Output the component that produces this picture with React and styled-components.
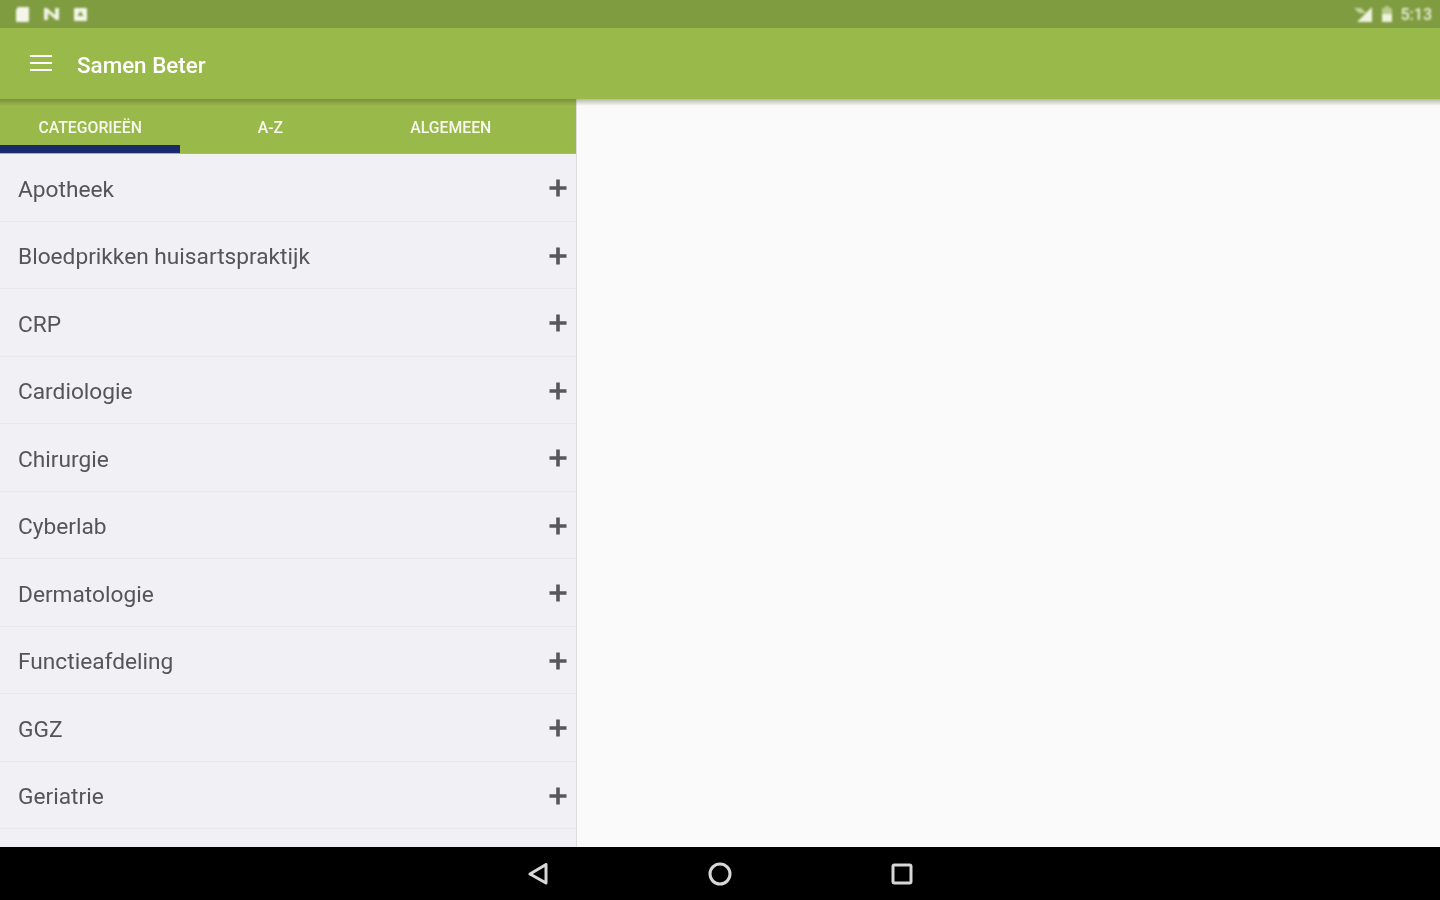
import React from "react";
import styled, { createGlobalStyle } from "styled-components";

const Global = createGlobalStyle`
  html, body { margin: 0; padding: 0; height: 100%; overflow: hidden; background: #fafafa; }
  body { font-family: Roboto, "Liberation Sans", sans-serif; }
`;
const Page = styled.div`
  width: 1440px; height: 900px; display: flex; flex-direction: column; overflow: hidden;
`;
const StatusBar = styled.div`
  height: 28px; flex: none; background: #7f9c40; display: flex; align-items: center;
  justify-content: space-between; padding: 0 8px 0 14px; box-sizing: border-box;
`;
const StatusGroup = styled.div`
  display: flex; align-items: center; gap: ${p => p.$gap}px; filter: blur(0.8px);
`;
const Clock = styled.span`
  color: #eef3de; font-size: 16px; font-weight: 500;
`;
const Toolbar = styled.header`
  height: 71px; flex: none; background: #9ab94b; display: flex; align-items: center;
  padding: 0 0 2px 29px; box-sizing: border-box; gap: 24px; position: relative; z-index: 2;
`;
const Title = styled.h1`
  margin: 4px 0 0; color: #fff; font-size: 22.4px; font-weight: 500; filter: blur(0.7px);
`;
const Body = styled.div`
  flex: 1; display: flex; min-height: 0; position: relative;
  &::before {
    content: ""; position: absolute; left: 0; right: 0; top: 0; height: 7px; z-index: 3;
    background: linear-gradient(rgba(70, 80, 30, .38), rgba(70, 80, 30, 0));
  }
`;
const Sidebar = styled.aside`
  width: 575.5px; flex: none; border-right: 1.5px solid #dedee2;
  display: flex; flex-direction: column; overflow: hidden; background: #f0f0f5;
`;
const Tabs = styled.nav`
  height: 55px; flex: none; display: grid; grid-template-columns: repeat(3, 180.3px);
  background: #9ab94b; box-sizing: border-box; border-bottom: 1px solid #a9b87c;
`;
const Tab = styled.div`
  display: flex; align-items: center; justify-content: center; padding-top: 11px;
  color: #f7f9ee; font-size: 15.8px; font-weight: 500;
  box-sizing: border-box; filter: blur(0.7px);
  border-bottom: 8px solid ${p => (p.$active ? "#1b2a6b" : "transparent")};
`;
const Row = styled.div`
  height: 67.5px; flex: none; box-sizing: border-box; display: flex; align-items: center;
  justify-content: space-between; padding: 1.5px 8px 0 18px; border-bottom: 1.5px solid #e8e8ec;
`;
const RowLabel = styled.span`
  color: #555558; font-size: 22.7px; margin-top: 2.5px; filter: blur(0.7px);
`;
const Main = styled.main`
  flex: 1; background: #fafafa;
`;
const NavBar = styled.footer`
  height: 53px; flex: none; background: #000; display: flex; align-items: center;
  justify-content: center; gap: 155.5px; box-sizing: border-box;
`;
const NavIcon = styled.svg`
  width: 26px; height: 26px; display: block; fill: none; stroke: #d8d8d8; stroke-width: 3;
  stroke-linejoin: round; filter: blur(0.7px);
`;
const PlusIcon = styled.svg`
  width: 20px; height: 20px; display: block; flex: none; filter: blur(0.7px);
`;
const MenuIcon = styled.svg`
  width: 24px; height: 24px; display: block; flex: none; filter: blur(0.6px);
`;

const items = ["Apotheek", "Bloedprikken huisartspraktijk", "CRP", "Cardiologie", "Chirurgie", "Cyberlab", "Dermatologie", "Functieafdeling", "GGZ", "Geriatrie", ""];

const Plus = () => (
  <PlusIcon viewBox="0 0 20 20"><path d="M10 1.5v17M1.5 10h17" stroke="#58585c" strokeWidth="3.6" /></PlusIcon>
);

export default function App() {
  return (
    <Page>
      <Global />
      <StatusBar>
        <StatusGroup $gap={13}>
          <svg width="16" height="17" viewBox="0 0 16 17"><path d="M4 1h10a1 1 0 0 1 1 1v13a1 1 0 0 1-1 1H3a1 1 0 0 1-1-1V4z" fill="#f4f6ea" /></svg>
          <svg width="17" height="14" viewBox="0 0 17 14"><path d="M1 13V1h3l8 7V1h4v12h-3L5 6v7z" fill="#f0f3e4" /></svg>
          <svg width="15" height="15" viewBox="0 0 15 15"><path fillRule="evenodd" d="M2 1h11a1 1 0 0 1 1 1v11a1 1 0 0 1-1 1H2a1 1 0 0 1-1-1V2a1 1 0 0 1 1-1zm5.500 3L4.500 9h6z" fill="#f4f6ea" /></svg>
        </StatusGroup>
        <StatusGroup $gap={8}>
          <svg width="20" height="17" viewBox="0 0 20 17"><path d="M19 1v15H4z" fill="#eef2de" /><path d="M1 2h7l5 5H6z" fill="#c4d3a2" /></svg>
          <svg width="12" height="16" viewBox="0 0 12 16"><path d="M4 0h4v2h3v14H1V2h3z" fill="#b9cb8c" /><path d="M1 8h10v8H1z" fill="#eef2de" /></svg>
          <Clock>5:13</Clock>
        </StatusGroup>
      </StatusBar>
      <Toolbar>
        <MenuIcon viewBox="0 0 24 24"><path d="M1 5h22M1 12h22M1 19h22" stroke="#fff" strokeWidth="2.200" /></MenuIcon>
        <Title>Samen Beter</Title>
      </Toolbar>
      <Body>
        <Sidebar>
          <Tabs>
            <Tab $active>CATEGORIEËN</Tab>
            <Tab>A-Z</Tab>
            <Tab>ALGEMEEN</Tab>
          </Tabs>
          {items.map((t, i) => (
            <Row key={i}>
              <RowLabel>{t}</RowLabel>
              {t && <Plus />}
            </Row>
          ))}
        </Sidebar>
        <Main />
      </Body>
      <NavBar>
        <NavIcon viewBox="0 0 26 26"><path d="M20 3.500v18.500L4 13z" /></NavIcon>
        <NavIcon viewBox="0 0 26 26"><circle cx="13" cy="13" r="10" /></NavIcon>
        <NavIcon viewBox="0 0 26 26"><rect x="4" y="4" width="18" height="18" rx="1.500" /></NavIcon>
      </NavBar>
    </Page>
  );
}
